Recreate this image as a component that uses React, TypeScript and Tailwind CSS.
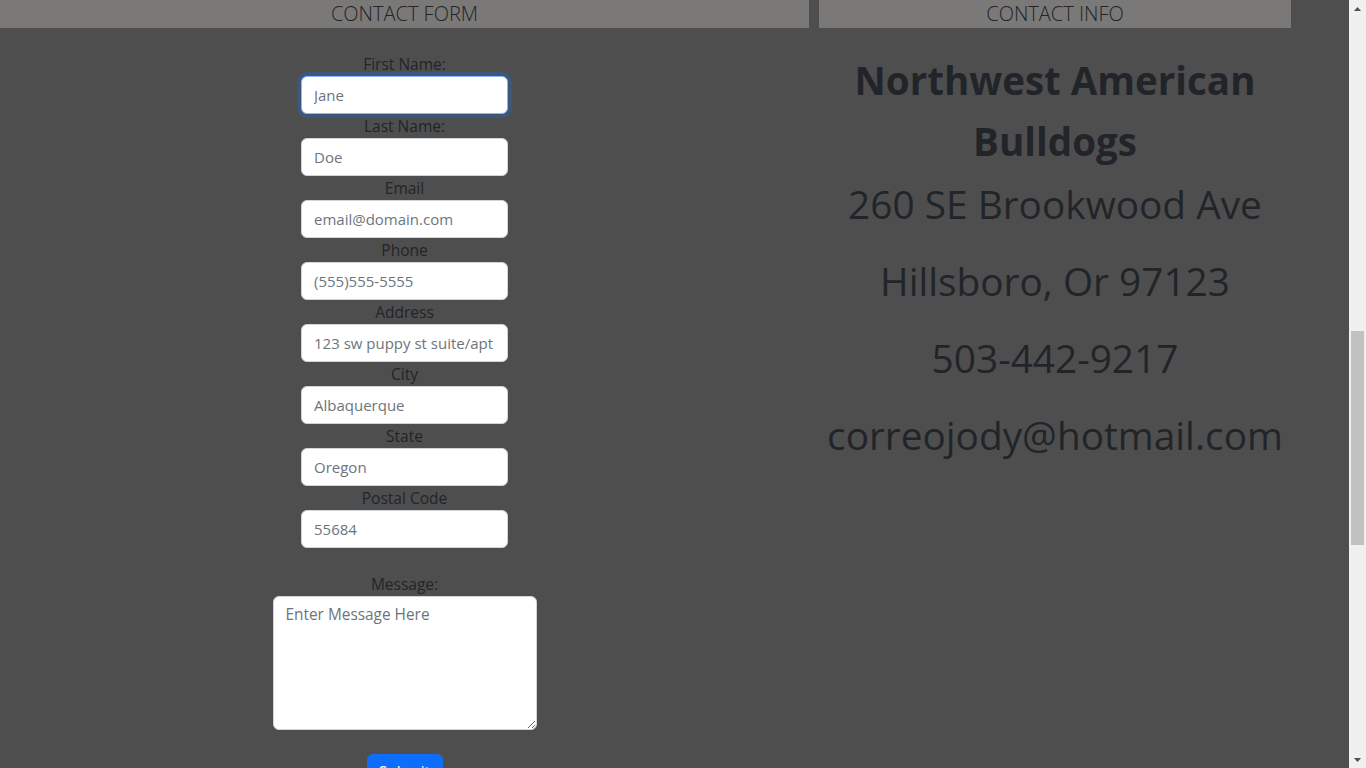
import React from 'react';

const fields = [
  { label: 'First Name:', placeholder: 'Jane', focused: true },
  { label: 'Last Name:', placeholder: 'Doe' },
  { label: 'Email', placeholder: 'email@domain.com' },
  { label: 'Phone', placeholder: '(555)555-5555' },
  { label: 'Address', placeholder: '123 sw puppy st suite/apt' },
  { label: 'City', placeholder: 'Albaquerque' },
  { label: 'State', placeholder: 'Oregon' },
  { label: 'Postal Code', placeholder: '55684' },
];

const ScrollBar: React.FC = () => (
  <div className="w-[17px] shrink-0 bg-[#f0f0f0] flex flex-col">
    <div className="h-[17px] flex items-center justify-center">
      <svg width="7" height="4" viewBox="0 0 7 4">
        <path d="M3.5 0 L7 4 L0 4 Z" fill="#505050" />
      </svg>
    </div>
    <div className="flex-1 flex flex-col px-[2px]">
      <div className="mt-[314px] h-[214px] bg-[#c1c1c1]" />
    </div>
    <div className="h-[17px] flex items-center justify-center">
      <svg width="7" height="4" viewBox="0 0 7 4">
        <path d="M0 0 L7 0 L3.5 4 Z" fill="#505050" />
      </svg>
    </div>
  </div>
);

export default function App() {
  return (
    <div className="flex h-screen overflow-hidden bg-[#4e4e4e] text-[#212529] font-['Open_Sans','Noto_Sans',sans-serif]">
      <div className="flex-1 flex items-start">
        {/* Contact form */}
        <section className="w-[809px] shrink-0">
          <div className="h-[28px] bg-[#7a7977] text-center text-[20px] leading-[28px] font-light">
            CONTACT FORM
          </div>
          <form className="flex flex-col items-center pt-6" onSubmit={(e) => e.preventDefault()}>
            {fields.map((f) => (
              <React.Fragment key={f.label}>
                <label className="text-[15.5px] leading-6">{f.label}</label>
                <input
                  type="text"
                  placeholder={f.placeholder}
                  className={`w-[207px] h-[38px] rounded-[6px] bg-white pl-3 pr-2 text-[15px] placeholder:text-[#6c757d] outline-none border ${
                    f.focused ? 'border-[#86b7fe] shadow-[0_0_0_4px_rgba(13,110,253,0.25)]' : 'border-[#ced4da]'
                  }`}
                />
              </React.Fragment>
            ))}
            <label className="mt-6 text-[15.5px] leading-6">Message:</label>
            <textarea
              placeholder="Enter Message Here"
              className="w-[264px] h-[134px] rounded-[6px] bg-white border border-[#ced4da] px-3 py-[6px] text-[15.4px] leading-6 placeholder:text-[#6c757d] outline-none"
            />
            <button
              type="submit"
              className="mt-6 w-[76px] h-[38px] rounded-[6px] bg-[#0d6efd] text-white text-[15.5px]"
            >
              Submit
            </button>
          </form>
        </section>

        {/* Contact info */}
        <section className="w-[472px] ml-[10px] shrink-0">
          <div className="h-[28px] bg-[#7a7977] text-center text-[20px] leading-[28px] font-light">
            CONTACT INFO
          </div>
          <div className="text-center">
            <h1 className="mt-[22px] mb-[2px] text-[38.5px] leading-[61px] font-bold">
              Northwest American Bulldogs
            </h1>
            <p className="text-[38.8px] leading-[61px] mb-4">260 SE Brookwood Ave</p>
            <p className="text-[38.8px] leading-[61px] mb-4">Hillsboro, Or 97123</p>
            <p className="text-[38.8px] leading-[61px] mb-4">503-442-9217</p>
            <p className="text-[38.8px] leading-[61px] mb-4">correojody@hotmail.com</p>
          </div>
        </section>
      </div>
      <ScrollBar />
    </div>
  );
}
